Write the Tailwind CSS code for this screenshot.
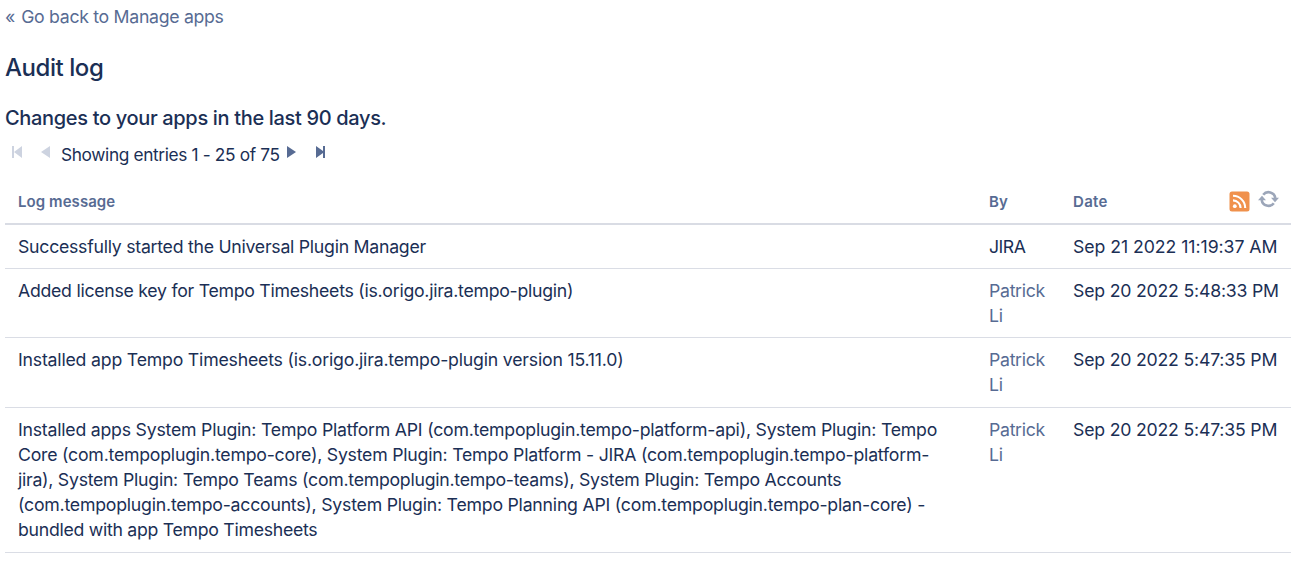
<!DOCTYPE html>
<html lang="en"><head><meta charset="utf-8"><title>Audit log</title><script src="https://cdn.jsdelivr.net/npm/@tailwindcss/browser@4"></script></head>
<body class="bg-white font-['Inter',sans-serif] text-[17.7px] leading-[25.2px] text-[#1b2f55]">
<main class="pl-[5px] pr-[6px] pt-[4px]">
<a class="block h-[50px] text-[#576b93] whitespace-nowrap tracking-[-0.3px]"><span class="mr-[1.5px]">«</span><span> Go back to Manage apps</span></a>
<h1 class="h-[51px] text-[24px] leading-[28px] font-medium whitespace-nowrap tracking-[-0.44px]"><span>Audit log</span></h1>
<h2 class="h-[37px] text-[20px] leading-[26px] font-medium whitespace-nowrap tracking-[-0.335px]"><span>Changes to your apps in the last 90 days.</span></h2>
<div class="flex h-[38px] whitespace-nowrap pl-[6px]">
<svg class="mt-[3px] mr-[18px] h-[14px] w-[12px]" viewBox="0 0 12 14" fill="#cdd3e0"><path d="M1 1h2v12H1zM11 1v12L3 7z"/></svg>
<svg class="mt-[3px] mr-[9px] h-[14px] w-[11px]" viewBox="0 0 11 14" fill="#cdd3e0"><path d="M9 1v12L0 7z"/></svg>
<span class="w-[225px] text-[17.3px] tracking-[-0.36px]">Showing entries 1 - 25 of 75</span>
<svg class="mt-[3px] mr-[18px] h-[14px] w-[11px]" viewBox="0 0 11 14" fill="#576b93"><path d="M1 1v12l9-6z"/></svg>
<svg class="mt-[3px] h-[14px] w-[12px]" viewBox="0 0 12 14" fill="#576b93"><path d="M1 1v12l7-5v5h2V1H8v5z"/></svg>
</div>
<table class="w-full table-fixed">
<colgroup><col class="w-[971px]"><col class="w-[84px]"><col></colgroup>
<thead><tr class="h-[44px] border-b-2 border-[#d9dce4] text-left text-[15px] tracking-[0.07px] text-[#576b93]"><th class="pl-[13px] font-semibold"><span>Log message</span></th><th class="pl-[13px] font-semibold"><span>By</span></th><th class="pl-[13px] pr-[12px] font-semibold"><div class="flex h-[25px] items-center"><span class="grow tracking-[0.3px]">Date</span>
<svg class="h-[21px] w-[21px] mr-[8px]" viewBox="0 0 21 21"><rect x=".5" y=".5" width="20" height="20" rx="2.5" fill="#f0914c"/><circle cx="5.8" cy="15.2" r="1.9" fill="#fff"/><path d="M4 9.4a7.6 7.6 0 0 1 7.6 7.6M4 4.8A12.2 12.2 0 0 1 16.2 17" fill="none" stroke="#fff" stroke-width="2.1"/></svg>
<svg class="h-[18px] w-[21px] -mt-[6px]" viewBox="0 0 21 18"><g fill="none" stroke="#9ca6b9" stroke-width="2.6"><path d="M5.2 4.8A6.8 6.8 0 0 1 17.3 8"/><path d="M15.8 13.2A6.8 6.8 0 0 1 3.7 10"/></g><path d="M13 7.8h8L17 12.2zM0 10.2h8L4 5.8z" fill="#9ca6b9"/></svg></div></th></tr></thead>
<tbody class="tracking-[-0.2px]">
<tr class="h-[44px] border-b border-[#dadde5] align-top"><td class="pl-[13px] pt-[9px] tracking-[-0.26px]"><span>Successfully started the Universal Plugin Manager</span></td><td class="pl-[13px] pt-[9px] tracking-[-0.5px]"><span>JIRA</span></td><td class="pl-[13px] pt-[9px] whitespace-nowrap tracking-[-0.06px]"><span>Sep 21 2022 11:19:37 AM</span></td></tr>
<tr class="h-[69.5px] border-b border-[#dadde5] align-top"><td class="pl-[13px] pt-[9px] tracking-[-0.265px]"><span>Added license key for Tempo Timesheets (is.origo.jira.tempo-plugin)</span></td><td class="pl-[13px] pt-[9px] text-[#576b93] tracking-[-0.3px]">Patrick<br>Li</td><td class="pl-[13px] pt-[9px] whitespace-nowrap"><span>Sep 20 2022 5:48:33 PM</span></td></tr>
<tr class="h-[69.5px] border-b border-[#dadde5] align-top"><td class="pl-[13px] pt-[9px]"><span>Installed app Tempo Timesheets (is.origo.jira.tempo-plugin version 15.11.0)</span></td><td class="pl-[13px] pt-[9px] text-[#576b93] tracking-[-0.3px]">Patrick<br>Li</td><td class="pl-[13px] pt-[9px] whitespace-nowrap"><span>Sep 20 2022 5:47:35 PM</span></td></tr>
<tr class="h-[145px] border-b border-[#dadde5] align-top"><td class="pl-[13px] pt-[9px] whitespace-nowrap tracking-[-0.222px]"><span>Installed apps System Plugin: Tempo Platform API (com.tempoplugin.tempo-platform-api), System Plugin: Tempo</span><br><span>Core (com.tempoplugin.tempo-core), System Plugin: Tempo Platform - JIRA (com.tempoplugin.tempo-platform-</span><br><span class="tracking-[-0.26px]">jira), System Plugin: Tempo Teams (com.tempoplugin.tempo-teams), System Plugin: Tempo Accounts</span><br><span>(com.tempoplugin.tempo-accounts), System Plugin: Tempo Planning API (com.tempoplugin.tempo-plan-core) -</span><br><span class="tracking-[-0.28px]">bundled with app Tempo Timesheets</span></td><td class="pl-[13px] pt-[9px] text-[#576b93] tracking-[-0.3px]">Patrick<br>Li</td><td class="pl-[13px] pt-[9px] whitespace-nowrap"><span>Sep 20 2022 5:47:35 PM</span></td></tr>
</tbody></table>
</main>
</body></html>
